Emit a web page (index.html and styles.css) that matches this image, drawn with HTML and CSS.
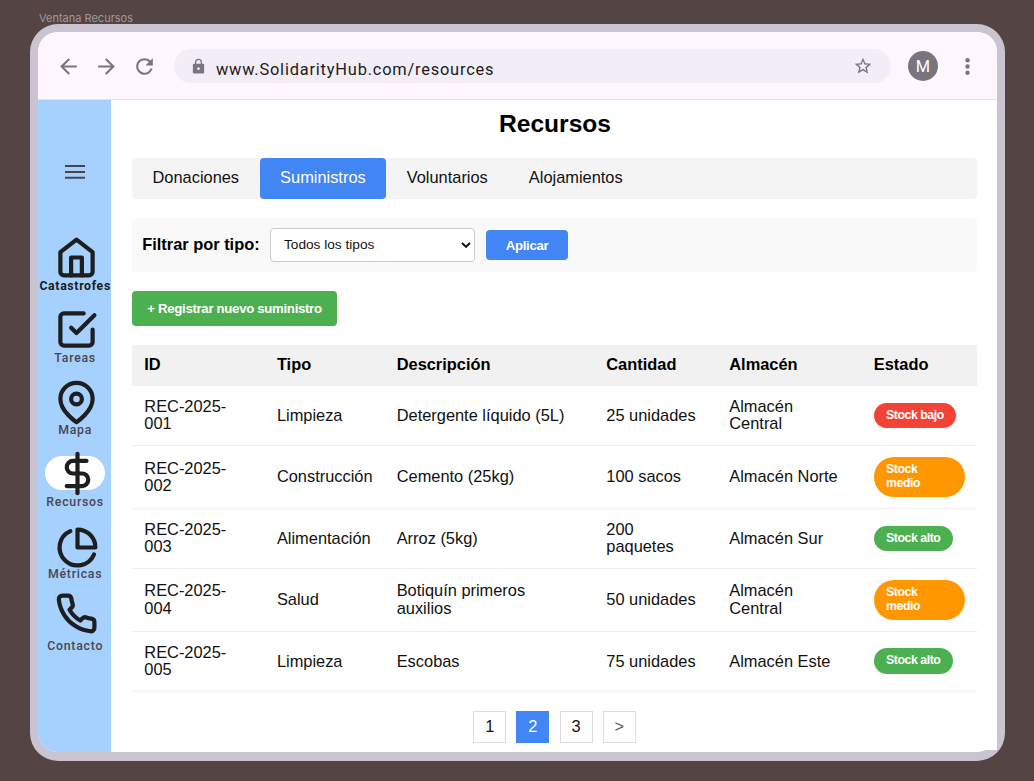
FILE: index.html
```html
<!DOCTYPE html>
<html lang="es">
<head>
<meta charset="utf-8">
<title>Ventana Recursos</title>
<link rel="stylesheet" href="styles.css">
</head>
<body>
<div class="frame-name">Ventana Recursos</div>
<div class="window">
  <header class="toolbar">
    <svg class="tool" viewBox="0 0 24 24"><path d="M20 11H7.83l5.59-5.59L12 4l-8 8 8 8 1.41-1.41L7.83 13H20v-2z"/></svg>
    <svg class="tool" viewBox="0 0 24 24"><path d="M12 4l-1.41 1.41L16.17 11H4v2h12.17l-5.58 5.59L12 20l8-8z"/></svg>
    <svg class="tool" viewBox="0 0 24 24"><path d="M17.65 6.35A7.96 7.96 0 0 0 12 4a8 8 0 1 0 7.73 10h-2.08A6 6 0 1 1 12 6c1.66 0 3.14.69 4.22 1.78L13 11h7V4l-2.35 2.35z"/></svg>
    <div class="address">
      <svg class="lock" viewBox="0 0 24 24"><path d="M18 8h-1V6A5 5 0 0 0 7 6v2H6a2 2 0 0 0-2 2v10c0 1.1.9 2 2 2h12a2 2 0 0 0 2-2V10a2 2 0 0 0-2-2zm-6 9a2 2 0 1 1 0-4 2 2 0 0 1 0 4zm3.1-9H8.9V6a3.1 3.1 0 0 1 6.2 0z"/></svg>
      <span class="url">www.SolidarityHub.com/resources</span>
      <svg class="star" viewBox="0 0 24 24"><path d="M22 9.24l-7.19-.62L12 2 9.19 8.63 2 9.24l5.46 4.73L5.82 21 12 17.27 18.18 21l-1.63-7.03zM12 15.4l-3.76 2.27 1-4.28-3.32-2.88 4.38-.38L12 6.1l1.71 4.04 4.38.38-3.32 2.88 1 4.28z"/></svg>
    </div>
    <div class="avatar">M</div>
    <svg class="more" viewBox="0 0 24 24"><circle cx="12" cy="6" r="2.1"/><circle cx="12" cy="12" r="2.1"/><circle cx="12" cy="18" r="2.1"/></svg>
  </header>
  <div class="body">
    <nav class="sidebar">
      <svg class="menu" viewBox="0 0 20 14"><path d="M0 1.1h20M0 7h20M0 12.8h20"/></svg>
      <a class="item strong"><svg class="glyph" viewBox="0 0 24 24"><path d="M3 9l9-7 9 7v11a2 2 0 0 1-2 2H5a2 2 0 0 1-2-2z"/><path d="M9 22V12h6v10"/></svg><span>Catastrofes</span></a>
      <a class="item"><svg class="glyph" viewBox="0 0 24 24"><path d="M9 11l3 3L22 4"/><path d="M21 12v7a2 2 0 0 1-2 2H5a2 2 0 0 1-2-2V5a2 2 0 0 1 2-2h11"/></svg><span>Tareas</span></a>
      <a class="item"><svg class="glyph map" viewBox="0 0 24 24"><path d="M21 10c0 7-9 13-9 13s-9-6-9-13a9 9 0 0 1 18 0z"/><circle cx="12" cy="10" r="3"/></svg><span>Mapa</span></a>
      <a class="item current"><svg class="glyph dollar" viewBox="0 0 24 24"><path d="M12 1v22"/><path d="M17 5H9.5a3.5 3.5 0 0 0 0 7h5a3.5 3.5 0 0 1 0 7H6"/></svg><span>Recursos</span></a>
      <a class="item"><svg class="glyph pie" viewBox="0 0 24 24"><path d="M21.21 15.89A10 10 0 1 1 8 2.83"/><path d="M22 12A10 10 0 0 0 12 2v10z"/></svg><span>Métricas</span></a>
      <a class="item"><svg class="glyph phone" viewBox="0 0 24 24"><path d="M22 16.92v3a2 2 0 0 1-2.18 2 19.79 19.79 0 0 1-8.63-3.07 19.5 19.5 0 0 1-6-6 19.79 19.79 0 0 1-3.07-8.67A2 2 0 0 1 4.11 2h3a2 2 0 0 1 2 1.72 12.84 12.84 0 0 0 .7 2.81 2 2 0 0 1-.45 2.11L8.09 9.91a16 16 0 0 0 6 6l1.27-1.27a2 2 0 0 1 2.11-.45 12.84 12.84 0 0 0 2.81.7A2 2 0 0 1 22 16.92z"/></svg><span>Contacto</span></a>
    </nav>
    <main class="content">
      <h1>Recursos</h1>
      <div class="tabs">
        <a class="tab">Donaciones</a><a class="tab active">Suministros</a><a class="tab">Voluntarios</a><a class="tab">Alojamientos</a>
      </div>
      <div class="filter">
        <label for="tipo">Filtrar por tipo:</label>
        <div class="select-wrap">
          <select id="tipo"><option>Todos los tipos</option></select>
          <svg class="chevron" viewBox="0 0 10 6"><path d="M1 1l4 3.8L9 1"/></svg>
        </div>
        <button class="apply">Aplicar</button>
      </div>
      <button class="create">+ Registrar nuevo suministro</button>
      <table>
        <colgroup><col class="c-id"><col class="c-type"><col class="c-desc"><col class="c-qty"><col class="c-store"><col class="c-state"></colgroup>
        <thead><tr><th>ID</th><th>Tipo</th><th>Descripción</th><th>Cantidad</th><th>Almacén</th><th>Estado</th></tr></thead>
        <tbody>
          <tr><td>REC-2025-<br>001</td><td>Limpieza</td><td>Detergente líquido (5L)</td><td>25 unidades</td><td>Almacén<br>Central</td><td><span class="badge low">Stock bajo</span></td></tr>
          <tr class="tall"><td>REC-2025-<br>002</td><td>Construcción</td><td>Cemento (25kg)</td><td>100 sacos</td><td>Almacén Norte</td><td><span class="badge mid">Stock<br>medio</span></td></tr>
          <tr><td>REC-2025-<br>003</td><td>Alimentación</td><td>Arroz (5kg)</td><td>200<br>paquetes</td><td>Almacén Sur</td><td><span class="badge high">Stock alto</span></td></tr>
          <tr class="tall"><td>REC-2025-<br>004</td><td>Salud</td><td>Botiquín primeros<br>auxilios</td><td>50 unidades</td><td>Almacén<br>Central</td><td><span class="badge mid">Stock<br>medio</span></td></tr>
          <tr><td>REC-2025-<br>005</td><td>Limpieza</td><td>Escobas</td><td>75 unidades</td><td>Almacén Este</td><td><span class="badge high">Stock alto</span></td></tr>
        </tbody>
      </table>
      <div class="pages"><a>1</a><a class="on">2</a><a>3</a><a class="next">&gt;</a></div>
    </main>
  </div>
</div>
</body>
</html>
```
FILE: styles.css
```css
* { box-sizing: border-box; }
body {
  margin: 0;
  height: 781px;
  overflow: hidden;
  padding: 11px 29px 0 30px;
  background: #544443;
  font: 16.4px/17.5px "Liberation Sans", Arial, sans-serif;
  color: #111;
}
.frame-name {
  height: 13px;
  padding-left: 9px;
  font: 11px/14px Inter, sans-serif;
  color: #a39998;
}
.window {
  width: 975px;
  height: 737px;
  border: solid #cac4d0;
  border-width: 8px 8px 9px;
  border-radius: 28px;
  background: #fff;
}

/* Browser bar */
.toolbar {
  height: 68px;
  display: flex;
  align-items: center;
  padding: 1px 17px 0 17.8px;
  background: #fef7ff;
  border-bottom: 1px solid #e9e0ec;
  border-radius: 20px 20px 0 0;
}
.toolbar svg { fill: #79747e; flex: none; }
.tool { width: 25px; height: 25px; margin-right: 13.2px; }
.address {
  width: 717px;
  height: 34px;
  margin-left: 3.6px;
  display: flex;
  align-items: center;
  padding: 0 17.5px 0 16.5px;
  border-radius: 17px;
  background: #f3edf7;
}
.lock { width: 17px; height: 17px; }
.url {
  flex: 1;
  padding: 8px 0 0 8.5px;
  font: 16.4px/20px Roboto, sans-serif;
  letter-spacing: .8px;
  color: #1d1b20;
}
.star { width: 20px; height: 20px; }
.avatar {
  width: 30px;
  height: 30px;
  margin: 0 17px;
  border-radius: 50%;
  background: #79747e;
  color: #fff;
  text-align: center;
  font: 16.4px/31px Roboto, sans-serif;
}
.more { width: 25px; height: 25px; }

.body { display: flex; height: 652px; }

/* Navigation rail */
.sidebar {
  width: 73.5px;
  display: flex;
  flex-direction: column;
  align-items: center;
  padding-top: 65px;
  background: #a6d1ff;
  border-bottom-left-radius: 20px 19px;
}
.menu {
  width: 20px;
  height: 14px;
  margin-bottom: 57px;
  fill: none;
  stroke: #49454f;
  stroke-width: 2;
}
.item {
  position: relative;
  width: 73px;
  height: 72px;
  flex: none;
  display: flex;
  flex-direction: column;
  align-items: center;
  color: #49454f;
  font: 500 12.3px/14px Roboto, sans-serif;
  letter-spacing: .75px;
  white-space: nowrap;
}
.item span { padding-left: 1px; position: relative; }
.strong { color: #1d1b20; font-weight: 700; letter-spacing: .65px; }
.glyph {
  position: relative;
  left: 2px;
  width: 43px;
  height: 43px;
  flex: none;
  overflow: visible;
  fill: none;
  stroke: #1e1e1e;
  stroke-width: 2.35;
  stroke-linecap: round;
  stroke-linejoin: round;
}
.map { top: 1px; }
.dollar { left: 3px; }
.pie { left: 3px; top: 1.5px; }
.phone { top: -4px; }
.current::before {
  content: "";
  position: absolute;
  left: 6.5px;
  top: 3.5px;
  width: 60px;
  height: 34.5px;
  border-radius: 18px;
  background: #fff;
}

/* Page */
.content {
  flex: 1;
  height: 650px;
  padding: 10px 20px 0 20.7px;
  background: #fff;
}
h1 {
  margin: 0 0 19.7px;
  padding-left: 1px;
  font-size: 24.6px;
  line-height: 28px;
  text-align: center;
  color: #000;
}
.tabs {
  display: flex;
  height: 41px;
  border-radius: 4px;
  background: #f4f4f4;
}
.tab { padding: 0 20.5px; line-height: 39.5px; border-radius: 4px; }
.tab.active { background: #4285f4; color: #fff; }
.filter {
  display: flex;
  align-items: center;
  height: 53.5px;
  margin: 19.7px 0 19.6px;
  padding: 0 10.2px;
  border-radius: 4px;
  background: #f9f9f9;
}
.filter label { width: 128.3px; padding-bottom: 1px; font-weight: 700; color: #000; }
.select-wrap { position: relative; width: 205px; height: 34px; margin-right: 10.5px; }
select {
  appearance: none;
  width: 100%;
  height: 100%;
  padding: 0 12.5px 1px;
  border: 1px solid #ccc;
  border-radius: 4px;
  background: #fff;
  color: #111;
  font: 13.67px "Liberation Sans", Arial, sans-serif;
}
.chevron {
  position: absolute;
  right: 4.5px;
  top: 14px;
  width: 10px;
  height: 6px;
  fill: none;
  stroke: #111;
  stroke-width: 2;
}
button {
  display: block;
  padding: 0;
  border: 0;
  border-radius: 4px;
  color: #fff;
  font: 700 13.2px "Liberation Sans", Arial, sans-serif;
  letter-spacing: -.3px;
}
.apply { width: 82px; height: 30.5px; background: #4285f4; }
.create { width: 205px; height: 34.5px; margin-bottom: 19.5px; background: #4caf50; }

table { width: 845px; table-layout: fixed; border-collapse: collapse; }
.c-id { width: 132.6px; }
.c-type { width: 119.8px; }
.c-desc { width: 209.6px; }
.c-qty { width: 123px; }
.c-store { width: 144.5px; }
.c-state { width: 115.5px; }
th { height: 40.4px; padding: 0 12.3px 1px; text-align: left; background: #f1f1f1; color: #000; }
td { height: 59.7px; padding: 0 12.3px; border-bottom: 1px solid #eee; white-space: nowrap; }
.tall td { height: 63.1px; }
.badge {
  display: inline-block;
  vertical-align: middle;
  padding: 6px 12.3px;
  border-radius: 20px;
  color: #fff;
  font-size: 12.3px;
  font-weight: 700;
  line-height: 13.7px;
  letter-spacing: -.45px;
}
.low { background: #f44336; }
.mid { width: 91.5px; background: #ff9800; }
.high { background: #4caf50; }

.pages { display: flex; justify-content: center; gap: 10.2px; margin-top: 19.5px; }
.pages a {
  width: 33px;
  height: 31.5px;
  border: 1px solid #ddd;
  text-align: center;
  line-height: 29px;
}
.pages .on { background: #4285f4; border-color: #4285f4; color: #fff; }
.pages .next { color: #555; }
```
